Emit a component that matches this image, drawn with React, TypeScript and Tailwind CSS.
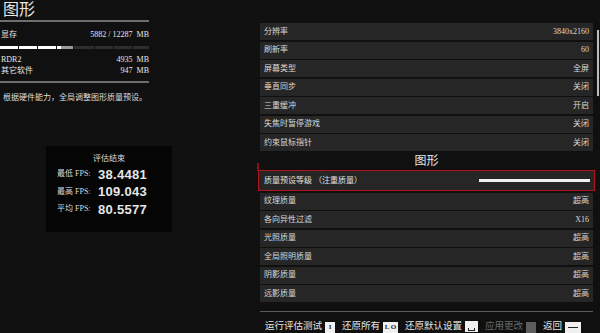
import React from "react";

const serif = { fontFamily: '"Liberation Serif", "Noto Sans CJK SC", serif' };

const displayRows = [
  ["分辨率", "3840x2160"],
  ["刷新率", "60"],
  ["屏幕类型", "全屏"],
  ["垂直同步", "关闭"],
  ["三重缓冲", "开启"],
  ["失焦时暂停游戏", "关闭"],
  ["约束鼠标指针", "关闭"],
];

const graphicsRows = [
  ["纹理质量", "超高"],
  ["各向异性过滤", "X16"],
  ["光照质量", "超高"],
  ["全局照明质量", "超高"],
  ["阴影质量", "超高"],
  ["远影质量", "超高"],
];

const Row = ({ label, value }: { label: string; value: string }) => (
  <div className="h-[17px] bg-[#262626] flex items-center justify-between px-[4px] text-[8px] text-[#d8d8d8]">
    <span>{label}</span>
    <span>{value}</span>
  </div>
);

const Key = ({ children, dim, w }: { children: React.ReactNode; dim?: boolean; w: string }) => (
  <span
    className={
      "inline-flex items-center justify-center h-[11px] text-[7px] leading-none font-bold shrink-0 " +
      w +
      " " +
      (dim ? "bg-[#5e5e5e] text-[#5e5e5e]" : "bg-[#f0f0f0] text-[#222]")
    }
  >
    {children}
  </span>
);

export default function App() {
  return (
    <div className="w-[600px] h-[333px] bg-[#101010] text-[#e6e6e6] flex overflow-hidden" style={serif}>
      {/* left column */}
      <div className="w-[258px] shrink-0 flex flex-col">
        <div className="w-[149px]">
          <div className="text-[16px] leading-none pl-[3px] pt-[2px] h-[19px]">图形</div>
          <div className="h-[2px] bg-[#6e6e6e] mt-[1px]" />
          <div className="flex justify-between text-[8px] mt-[8px] pl-[1px] leading-[10px]">
            <span>显存</span>
            <span>5882 / 12287&nbsp; MB</span>
          </div>
          <div className="flex mt-[6px] h-[3px] gap-[1px]">
            <div className="w-[18px] bg-white" />
            <div className="w-[18px] bg-white" />
            <div className="w-[18px] bg-white" />
            <div className="w-[4px] bg-white -mr-[1px]" />
            <div className="w-[12px] bg-[#9a9a9a]" />
            <div className="w-[20px] bg-[#2e2e2e]" />
            <div className="w-[18px] bg-[#2e2e2e]" />
            <div className="w-[18px] bg-[#2e2e2e]" />
            <div className="flex-1 bg-[#2e2e2e]" />
          </div>
          <div className="flex justify-between text-[8px] mt-[6px] pl-[1px] leading-[10px]">
            <span>RDR2</span>
            <span>4935&nbsp; MB</span>
          </div>
          <div className="flex justify-between text-[8px] mt-[1px] pl-[1px] leading-[10px]">
            <span>其它软件</span>
            <span>947&nbsp; MB</span>
          </div>
          <div className="h-[2px] bg-[#6e6e6e] mt-[5px]" />
        </div>
        <div className="text-[8px] mt-[9px] pl-[3px] text-[#dcdcdc]">根据硬件能力，全局调整图形质量预设。</div>

        <div className="ml-[46px] mt-[42px] w-[126px] h-[86px] bg-[#050505] flex flex-col items-center pt-[7px]">
          <div className="text-[8px] text-[#dcdcdc]">评估结束</div>
          {[
            ["最低", "38.4481"],
            ["最高", "109.043"],
            ["平均", "80.5577"],
          ].map(([k, v]) => (
            <div key={k} className="flex items-center w-full pl-[11px] h-[17px] mt-[0.5px]">
              <span className="text-[8px] w-[41px] text-[#dcdcdc]">
                {k} FPS:
              </span>
              <span
                className="text-[13px] font-bold tracking-[0.3px] leading-none"
                style={{ fontFamily: '"Liberation Sans", sans-serif' }}
              >
                {v}
              </span>
            </div>
          ))}
        </div>
      </div>

      {/* right column */}
      <div className="relative flex-1 flex flex-col pt-[23px] pl-[2px]">
        <div className="w-[333px] flex flex-col gap-[1.5px]">
          {displayRows.map(([l, v]) => (
            <Row key={l} label={l} value={v} />
          ))}
        </div>
        <div className="w-[333px] text-center text-[12px] leading-none mt-[3px] h-[16px] pt-[1px]">图形</div>
        <div className="w-[337px] -ml-[2px] h-[21px] border-[1.5px] border-[#b3131b] bg-[#262626] flex items-center justify-between pl-[5px] pr-[4px] text-[8px] text-[#e0e0e0]">
          <span>质量预设等级 （注重质量）</span>
          <span className="w-[111px] h-[3px] bg-[#f2f2f2]" />
        </div>
        <div className="w-[333px] flex flex-col gap-[1.5px] mt-[1.5px]">
          {graphicsRows.map(([l, v]) => (
            <Row key={l} label={l} value={v} />
          ))}
        </div>
        <div className="w-[333px] h-[1px] bg-[#5a5a5a] mt-[9px]" />
        <div className="flex items-center mt-[9px] pl-[5px] text-[9.5px] leading-none text-[#e6e6e6] whitespace-nowrap">
          <span>运行评估测试</span>
          <span className="ml-[3px]">
            <Key w="w-[10px]">I</Key>
          </span>
          <span className="ml-[7px]">还原所有</span>
          <span className="ml-[3px]">
            <Key w="w-[15px]">L O</Key>
          </span>
          <span className="ml-[7px]">还原默认设置</span>
          <span className="ml-[3px]">
            <Key w="w-[13px]">
              <span className="block w-[7px] h-[3px] mt-[5px] border-b-[1.5px] border-x-[1.5px] border-[#222]" />
            </Key>
          </span>
          <span className="ml-[7px] text-[#6a6a6a]">应用更改</span>
          <span className="ml-[3px]">
            <Key dim w="w-[10px]">-</Key>
          </span>
          <span className="ml-[7px]">返回</span>
          <span className="ml-[3px]">
            <Key w="w-[16px]">
              <span className="block w-[10px] h-[1.5px] bg-[#222]" />
            </Key>
          </span>
        </div>

        {/* scrollbar */}
        <div className="absolute left-[339px] top-[30px] w-[2px] h-[66px] bg-[#bdbdbd]" />
        {/* red accent */}
        <div className="absolute left-[-1px] top-[163px] w-[2px] h-[8px] bg-[#8a1018]" />
      </div>
    </div>
  );
}
